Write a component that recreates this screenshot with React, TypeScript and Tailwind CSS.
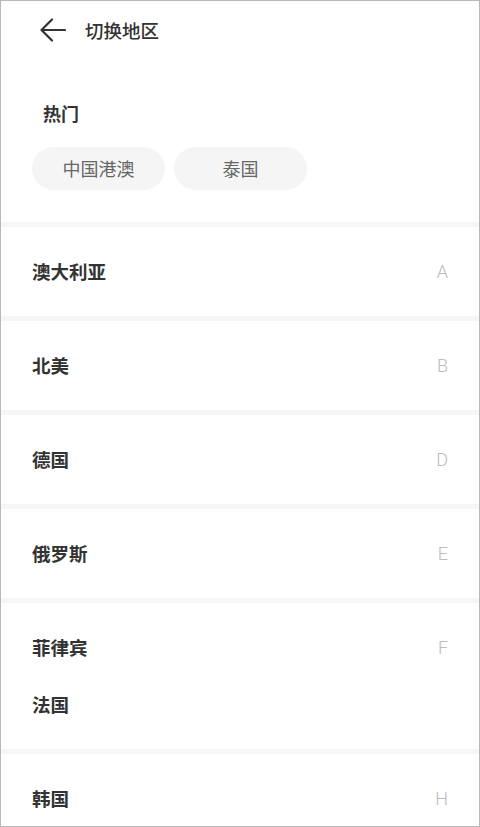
const sections: { letter: string; names: string[] }[] = [
  { letter: "A", names: ["澳大利亚"] },
  { letter: "B", names: ["北美"] },
  { letter: "D", names: ["德国"] },
  { letter: "E", names: ["俄罗斯"] },
  { letter: "F", names: ["菲律宾", "法国"] },
  { letter: "H", names: ["韩国"] },
];

const hot = ["中国港澳", "泰国"];

function BackArrow() {
  return (
    <svg width="26" height="24" viewBox="0 0 26 24" fill="none" stroke="#333" strokeWidth="2.2" strokeLinecap="round" strokeLinejoin="round">
      <path d="M25 12H2" />
      <path d="M12 1.5L1.5 12L12 22.5" />
    </svg>
  );
}

export default function App() {
  return (
    <div
      className="w-[480px] h-[827px] overflow-hidden bg-white border border-[#b8b8b8] flex flex-col"
      style={{ fontFamily: '"Noto Sans CJK SC", "Noto Sans", Roboto, sans-serif' }}
    >
      {/* header */}
      <div className="h-[58px] shrink-0 flex items-center pl-[39px]">
        <BackArrow />
        <span className="ml-[19px] text-[18.5px] leading-[26px] font-medium text-[#333]">切换地区</span>
      </div>

      {/* hot */}
      <div className="shrink-0 pt-[41px] pb-[32px]">
        <div className="pl-[42px] text-[18px] leading-[26px] font-bold text-[#333]">热门</div>
        <div className="mt-[21px] pl-[31px] flex gap-[9px]">
          {hot.map((h) => (
            <div
              key={h}
              className="w-[133px] h-[43px] rounded-full bg-[#f5f5f5] flex items-center justify-center text-[18px] text-[#666]"
            >
              {h}
            </div>
          ))}
        </div>
      </div>

      {sections.map((s) => (
        <div key={s.letter} className="shrink-0">
          <div className="h-[5px] bg-[#f6f6f6]" />
          <div className="flex justify-between py-4 pl-[31px] pr-[31px]">
            <div className="flex flex-col">
              {s.names.map((n) => (
                <div key={n} className="h-[57px] flex items-center text-[18.5px] font-bold text-[#333]">
                  {n}
                </div>
              ))}
            </div>
            <div
              className="h-[57px] flex items-center text-[18px] font-light text-[#bbb]"
              style={{ fontFamily: "Roboto, 'Liberation Sans', sans-serif" }}
            >
              {s.letter}
            </div>
          </div>
        </div>
      ))}
    </div>
  );
}
